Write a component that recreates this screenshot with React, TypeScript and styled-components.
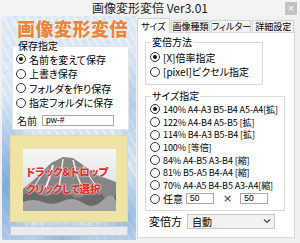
import React from "react";
import styled, { createGlobalStyle } from "styled-components";

const GlobalStyle = createGlobalStyle`
  html, body {
    margin: 0;
    padding: 0;
    background: #f0f0f0;
  }
  body {
    font-family: "Noto Sans CJK JP", "Noto Sans", sans-serif;
    font-size: 10px;
    color: #111;
    font-feature-settings: "palt";
  }
  * { box-sizing: border-box; }
`;

const Window = styled.div`
  width: 300px;
  height: 243px;
  display: flex;
  flex-direction: column;
  overflow: hidden;
  background: #f0f0f0;
`;

const TitleBar = styled.div`
  height: 16px;
  display: grid;
  grid-template-columns: 1fr auto 1fr;
  align-items: center;
  background: #f3f3f3;
`;

const Title = styled.div`
  grid-column: 2;
  font-size: 12px;
  line-height: 14px;
  color: #222;
`;

const CloseButton = styled.div`
  grid-column: 3;
  justify-self: end;
  margin-right: 3px;
  width: 12px;
  height: 13px;
  background: #c2c2c2;
  color: #fff;
  font: 9px "DejaVu Sans", sans-serif;
  display: flex;
  align-items: center;
  justify-content: center;
`;

const Body = styled.div`
  display: flex;
  padding-left: 2px;
`;

/* ---------- left side ---------- */

const LeftPanel = styled.div`
  width: 134px;
  height: 224px;
  display: flex;
  flex-direction: column;
  background:
    radial-gradient(ellipse 30px 90px at 4px 170px, rgba(96, 150, 205, 0.75), transparent),
    radial-gradient(ellipse 40px 50px at 125px 200px, rgba(110, 160, 210, 0.6), transparent),
    radial-gradient(ellipse 60px 20px at 60px 222px, rgba(120, 168, 212, 0.7), transparent),
    radial-gradient(ellipse 20px 60px at 130px 90px, rgba(140, 180, 220, 0.5), transparent),
    repeating-linear-gradient(62deg, rgba(255, 255, 255, 0.4) 0 2px, transparent 2px 7px),
    repeating-linear-gradient(-28deg, rgba(150, 185, 220, 0.2) 0 1px, transparent 1px 11px),
    linear-gradient(#dde9f5, #cfe0f1);
`;

const Logo = styled.div`
  margin: 3px 0 0 15px;
  height: 18px;
  font-size: 18px;
  line-height: 18px;
  font-weight: 900;
  letter-spacing: 0.5px;
  color: #e8873a;
  font-feature-settings: normal;
  text-shadow: 0 0 2px #fff, 0 0 1px #fff;
`;

const Group = styled.fieldset<{ $width: number; $white?: boolean }>`
  width: ${(p) => p.$width}px;
  margin: 0;
  padding: 0 3px;
  border: 1px solid ${(p) => (p.$white ? "#e4e4e4" : "#d9d9d9")};
  background: ${(p) => (p.$white ? "#fff" : "transparent")};
  display: flex;
  flex-direction: column;
`;

const Legend = styled.legend`
  padding: 0 1px;
  margin-left: 1px;
  font-size: 10px;
  line-height: 10px;
  height: 10px;
  color: #000;
`;

const SaveGroup = styled(Group)`
  margin: 4px 0 0 10px;
  padding: 1px 3px 2px 3px;
`;

const Row = styled.label<{ $h: number }>`
  height: ${(p) => p.$h}px;
  display: flex;
  align-items: center;
  gap: 3px;
  white-space: nowrap;
  font-size: 10px;
  color: #000;
`;

const Radio = styled.span<{ $on?: boolean }>`
  flex: none;
  width: 10px;
  height: 10px;
  border-radius: 50%;
  border: 1px solid #333;
  background: #fff;
  display: flex;
  align-items: center;
  justify-content: center;
  &::after {
    content: "";
    width: 4px;
    height: 4px;
    border-radius: 50%;
    background: ${(p) => (p.$on ? "#111" : "transparent")};
  }
`;

const NameRow = styled.div`
  margin-top: 3px;
  height: 14px;
  display: flex;
  align-items: center;
  gap: 5px;
  padding-left: 1px;
`;

const TextBox = styled.div<{ $w: number }>`
  width: ${(p) => p.$w}px;
  height: 11px;
  border: 1px solid #a8a8a8;
  background: #fff;
  font: 8.5px "Liberation Sans", sans-serif;
  line-height: 9px;
  padding-left: 3px;
  color: #000;
`;

const DropFrame = styled.div`
  margin: 5px 0 0 8px;
  width: 118px;
  height: 87px;
  padding: 13px 13px 12px 12px;
  background: #efe3a6;
  border: 1px solid #e8dc9c;
`;

const Photo = styled.div`
  position: relative;
  width: 93px;
  height: 62px;
  display: flex;
  flex-direction: column;
  padding: 16px 0 0 3px;
  gap: 4px;
  overflow: hidden;
  & > svg {
    position: absolute;
    inset: 0;
  }
`;

const DropText = styled.div`
  position: relative;
  font-size: 10.5px;
  line-height: 13px;
  font-weight: 900;
  letter-spacing: -0.2px;
  color: #d9302c;
  white-space: nowrap;
  text-shadow: 0 0 2px #fff, 0 0 1px #fff;
`;

const StatusBar = styled.div`
  margin: 4px 0 0 8px;
  width: 118px;
  height: 10px;
  background: #e9ebee;
  border: 1px solid #c9cdd3;
`;

/* ---------- right side ---------- */

const RightColumn = styled.div`
  margin-left: 1px;
  width: 158px;
  display: flex;
  flex-direction: column;
  padding-top: 2px;
`;

const TabStrip = styled.div`
  display: flex;
  align-items: flex-end;
  height: 15px;
  margin-bottom: -1px;
  position: relative;
  z-index: 1;
`;

const Tab = styled.div<{ $w: number; $active?: boolean }>`
  width: ${(p) => p.$w}px;
  height: ${(p) => (p.$active ? 15 : 13)}px;
  margin-right: 1px;
  border: 1px solid #d2d2d2;
  border-bottom: ${(p) => (p.$active ? "none" : "1px solid #d9d9d9")};
  background: ${(p) => (p.$active ? "#fff" : "#f3f3f3")};
  display: flex;
  align-items: center;
  justify-content: center;
  font-size: 9px;
  color: #000;
  white-space: nowrap;
`;

const TabPanel = styled.div`
  height: 206px;
  background: #fff;
  border: 1px solid #d9d9d9;
  padding: 4px 0 0 7px;
  display: flex;
  flex-direction: column;
`;

const MethodGroup = styled(Group)`
  padding: 3px 4px 5px 4px;
`;

const SizeGroup = styled(Group)`
  margin-top: 6px;
  padding: 2px 4px 4px 4px;
`;

const SizeRow = styled(Row)`
  font-size: 9px;
  letter-spacing: -0.1px;
  gap: 3px;
`;

const Times = styled.span`
  margin: 0 5px 0 6px;
  font: 11px "DejaVu Sans", sans-serif;
  color: #333;
`;

const ModeRow = styled.div`
  margin-top: 3px;
  height: 15px;
  display: flex;
  align-items: center;
  gap: 5px;
  padding-left: 4px;
  font-size: 11px;
  color: #000;
`;

const Select = styled.div`
  width: 88px;
  height: 15px;
  border: 1px solid #c6c6c6;
  background: #f2f2f2;
  display: flex;
  align-items: center;
  justify-content: space-between;
  padding: 0 3px 0 4px;
  font-size: 10px;
`;

const PhotoArt = () => (
  <svg width="93" height="62" viewBox="0 0 93 62">
    <defs>
      <linearGradient id="sky" x1="0" y1="0" x2="0" y2="1">
        <stop offset="0" stopColor="#f6f6f6" />
        <stop offset="1" stopColor="#d6d6d6" />
      </linearGradient>
    </defs>
    <rect width="93" height="62" fill="url(#sky)" />
    <polygon points="0,40 14,28 28,14 40,8 50,9 60,16 74,26 93,33 93,62 0,62" fill="#858585" />
    <polyline points="30,16 26,30 22,40" stroke="#f2f2f2" strokeWidth="2" fill="none" />
    <polyline points="40,10 38,26 36,38" stroke="#eaeaea" strokeWidth="1.5" fill="none" />
    <polyline points="50,11 54,26 58,36" stroke="#eeeeee" strokeWidth="1.5" fill="none" />
    <polyline points="60,17 68,30 74,38" stroke="#e6e6e6" strokeWidth="1.2" fill="none" />
    <polyline points="20,24 12,36" stroke="#e2e2e2" strokeWidth="1.2" fill="none" />
    <path d="M0 46 Q8 40 16 45 T32 44 T48 46 T64 43 T80 46 T93 44 V62 H0 Z" fill="#6a6a6a" />
    <path d="M0 53 Q10 49 20 53 T40 52 T60 54 T80 51 T93 53 V62 H0 Z" fill="#a2a2a2" />
  </svg>
);

const sizeOptions = [
  "140% A4-A3 B5-B4 A5-A4[拡]",
  "122% A4-B4 A5-B5 [拡]",
  "114% B4-A3 B5-B4 [拡]",
  "100% [等倍]",
  "84% A4-B5 A3-B4 [縮]",
  "81% B5-A5 B4-A4 [縮]",
  "70% A4-A5 B4-B5 A3-A4[縮]",
];

export default function App() {
  return (
    <Window>
      <GlobalStyle />
      <TitleBar>
        <Title>画像変形変倍 Ver3.01</Title>
        <CloseButton>×</CloseButton>
      </TitleBar>
      <Body>
        <LeftPanel>
          <Logo>画像変形変倍</Logo>
          <SaveGroup $width={117} $white>
            <Legend>保存指定</Legend>
            <Row $h={14.5}><Radio $on />名前を変えて保存</Row>
            <Row $h={14.5}><Radio />上書き保存</Row>
            <Row $h={14.5}><Radio />フォルダを作り保存</Row>
            <Row $h={14.5}><Radio />指定フォルダに保存</Row>
            <NameRow>
              名前
              <TextBox $w={72}>pw-#</TextBox>
            </NameRow>
          </SaveGroup>
          <DropFrame>
            <Photo>
              <PhotoArt />
              <DropText>ドラック&amp;ドロップ</DropText>
              <DropText>クリックして選択</DropText>
            </Photo>
          </DropFrame>
          <StatusBar />
        </LeftPanel>
        <RightColumn>
          <TabStrip>
            <Tab $w={33} $active>サイズ</Tab>
            <Tab $w={40}>画像種類</Tab>
            <Tab $w={40}>フィルター</Tab>
            <Tab $w={42}>詳細設定</Tab>
          </TabStrip>
          <TabPanel>
            <MethodGroup $width={118}>
              <Legend>変倍方法</Legend>
              <Row $h={14}><Radio $on />[X]倍率指定</Row>
              <Row $h={15}><Radio />[pixel]ピクセル指定</Row>
            </MethodGroup>
            <SizeGroup $width={140}>
              <Legend>サイズ指定</Legend>
              {sizeOptions.map((o, i) => (
                <SizeRow key={o} $h={12.7}>
                  <Radio $on={i === 0} />
                  {o}
                </SizeRow>
              ))}
              <Row $h={14}>
                <Radio />
                任意
                <TextBox $w={28}>50</TextBox>
                <Times>×</Times>
                <TextBox $w={28}>50</TextBox>
              </Row>
            </SizeGroup>
            <ModeRow>
              変倍方
              <Select>
                自動
                <svg width="8" height="6" viewBox="0 0 8 6">
                  <polyline points="1,1.5 4,4.5 7,1.5" fill="none" stroke="#444" strokeWidth="1.2" />
                </svg>
              </Select>
            </ModeRow>
          </TabPanel>
        </RightColumn>
      </Body>
    </Window>
  );
}
